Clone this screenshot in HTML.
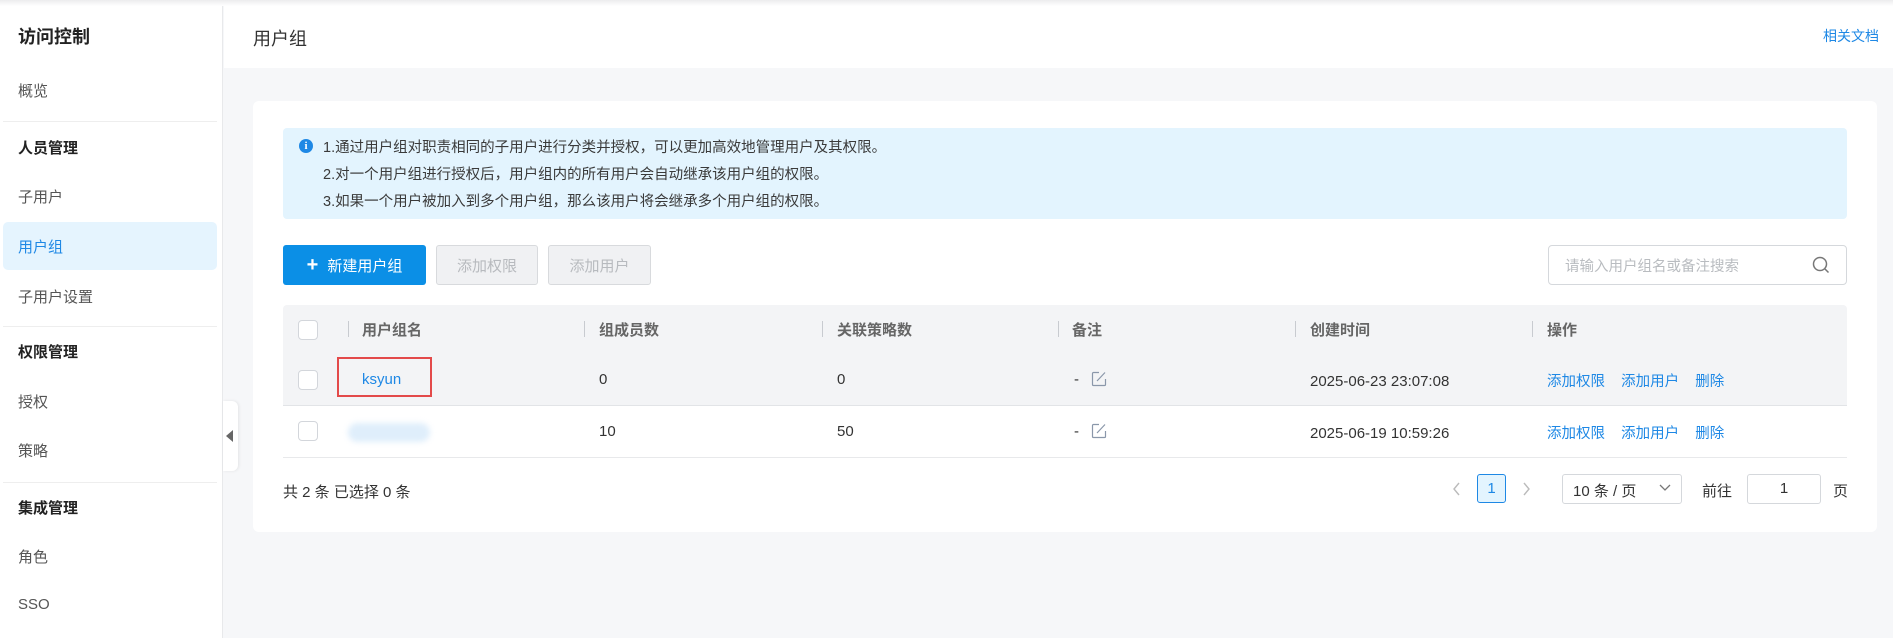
<!DOCTYPE html>
<html><head><meta charset="utf-8"><style>
*{margin:0;padding:0;box-sizing:border-box}
body{width:1893px;height:638px;overflow:hidden;background:#f6f7f9;font-family:"Liberation Sans","Noto Sans CJK SC",sans-serif;font-size:15px;color:#333;position:relative}
.a{position:absolute;white-space:nowrap}
.side{position:absolute;left:0;top:0;width:223px;height:638px;background:#fff;border-right:1px solid #e8e9eb}
.hdr{position:absolute;left:224px;top:0;width:1669px;height:68px;background:#fff}
.card{position:absolute;left:253px;top:101px;width:1624px;height:431px;background:#fff;border-radius:6px}
.cb{position:absolute;width:20px;height:20px;border:1px solid #d3d6db;border-radius:4px;background:#fff}
.th{color:#666;font-weight:bold}
.sep{position:absolute;width:1px;height:16px;background:#c8cbd0}
.lnk{color:#1e88e5}
.btn{position:absolute;top:245px;height:40px;border-radius:3px;display:flex;align-items:center;justify-content:center;font-size:15px}
</style></head><body>
<div style="position:absolute;left:0;top:0;width:1893px;height:6px;background:linear-gradient(#ececee,#fff);z-index:5"></div>
<div class="side">
<div class="a" style="left:18px;top:23px;font-size:18px;font-weight:bold;color:#222">访问控制</div>
<div class="a" style="left:18px;top:80px;color:#555">概览</div>
<div class="a" style="left:3px;top:121px;width:214px;height:1px;background:#eee"></div>
<div class="a" style="left:18px;top:137px;font-weight:bold;color:#222">人员管理</div>
<div class="a" style="left:18px;top:186px;color:#555">子用户</div>
<div class="a" style="left:3px;top:222px;width:214px;height:48px;background:#e5f4fe;border-radius:5px"></div>
<div class="a" style="left:18px;top:236px;color:#1e88e5">用户组</div>
<div class="a" style="left:18px;top:286px;color:#555">子用户设置</div>
<div class="a" style="left:3px;top:326px;width:214px;height:1px;background:#eee"></div>
<div class="a" style="left:18px;top:341px;font-weight:bold;color:#222">权限管理</div>
<div class="a" style="left:18px;top:391px;color:#555">授权</div>
<div class="a" style="left:18px;top:440px;color:#555">策略</div>
<div class="a" style="left:3px;top:482px;width:214px;height:1px;background:#eee"></div>
<div class="a" style="left:18px;top:497px;font-weight:bold;color:#222">集成管理</div>
<div class="a" style="left:18px;top:546px;color:#555">角色</div>
<div class="a" style="left:18px;top:596px;color:#555">SSO</div>
</div>
<div class="a" style="left:223px;top:401px;width:15px;height:70px;background:#fff;border-radius:0 6px 6px 0;box-shadow:1px 0 3px rgba(0,0,0,.08)"><div style="position:absolute;left:3px;top:29px;border-right:7px solid #666;border-top:6px solid transparent;border-bottom:6px solid transparent"></div></div>
<div class="hdr"></div>
<div class="a" style="left:253px;top:25px;font-size:18px;color:#333">用户组</div>
<div class="a lnk" style="left:1823px;top:26px;font-size:14px">相关文档</div>
<div class="card"></div>
<div class="a" style="left:283px;top:128px;width:1564px;height:91px;background:#e3f4fe;border-radius:4px"></div>
<div class="a" style="left:299px;top:139px;width:14px;height:14px;border-radius:50%;background:#1e88e5;color:#fff;font-size:11px;font-weight:bold;text-align:center;line-height:14px;font-family:'Liberation Serif',serif">i</div>
<div class="a" style="left:323px;top:135px;font-size:14.5px;color:#3a3a3a;line-height:27px">1.通过用户组对职责相同的子用户进行分类并授权，可以更加高效地管理用户及其权限。<br>2.对一个用户组进行授权后，用户组内的所有用户会自动继承该用户组的权限。<br>3.如果一个用户被加入到多个用户组，那么该用户将会继承多个用户组的权限。</div>
<div class="btn" style="left:283px;width:143px;background:#0b8fe6;color:#fff"><span style="font-size:20px;margin-right:9px;font-weight:bold">+</span>新建用户组</div>
<div class="btn" style="left:436px;width:102px;background:#f0f1f3;border:1px solid #d8dadd;color:#b7babe">添加权限</div>
<div class="btn" style="left:548px;width:103px;background:#f0f1f3;border:1px solid #d8dadd;color:#b7babe">添加用户</div>
<div class="a" style="left:1548px;top:245px;width:299px;height:40px;border:1px solid #d5d8dc;border-radius:4px;background:#fff"></div>
<div class="a" style="left:1565px;top:255px;font-size:14.5px;color:#b9bcc0">请输入用户组名或备注搜索</div>
<svg class="a" style="left:1812px;top:256px" width="18" height="18" viewBox="0 0 18 18"><circle cx="8" cy="8" r="6.5" fill="none" stroke="#777" stroke-width="1.5"/><path d="M13 13l3.5 3.5" stroke="#777" stroke-width="1.5"/></svg>
<div class="a" style="left:283px;top:305px;width:1564px;height:101px;background:#f3f4f6;border-radius:4px 4px 0 0"></div>
<div class="a" style="left:283px;top:405px;width:1564px;height:1px;background:#e2e4e7"></div>
<div class="a" style="left:283px;top:457px;width:1564px;height:1px;background:#e8e9eb"></div>
<div class="cb" style="left:298px;top:320px"></div>
<div class="cb" style="left:298px;top:370px"></div>
<div class="cb" style="left:298px;top:421px"></div>
<div class="sep" style="left:348px;top:321px"></div>
<div class="sep" style="left:584px;top:321px"></div>
<div class="sep" style="left:822px;top:321px"></div>
<div class="sep" style="left:1058px;top:321px"></div>
<div class="sep" style="left:1295px;top:321px"></div>
<div class="sep" style="left:1532px;top:321px"></div>
<div class="a th" style="left:362px;top:319px">用户组名</div>
<div class="a th" style="left:599px;top:319px">组成员数</div>
<div class="a th" style="left:837px;top:319px">关联策略数</div>
<div class="a th" style="left:1072px;top:319px">备注</div>
<div class="a th" style="left:1310px;top:319px">创建时间</div>
<div class="a th" style="left:1547px;top:319px">操作</div>
<div class="a" style="left:337px;top:357px;width:95px;height:40px;border:2px solid #e34a4a"></div>
<div class="a lnk" style="left:362px;top:371px">ksyun</div>
<div class="a" style="left:599px;top:371px">0</div>
<div class="a" style="left:837px;top:371px">0</div>
<div class="a" style="left:1074px;top:371px">-</div>
<svg class="a" style="left:1091px;top:371px" width="16" height="16" viewBox="0 0 16 16"><path d="M8 1.5H2.5a1 1 0 0 0-1 1v11a1 1 0 0 0 1 1h11a1 1 0 0 0 1-1V8M6 10l8-8.5" fill="none" stroke="#8a97aa" stroke-width="1.2"/></svg>
<div class="a" style="left:1310px;top:373px">2025-06-23 23:07:08</div>
<div class="a lnk" style="left:1547px;top:370px;font-size:14.5px">添加权限&nbsp;&nbsp;&nbsp;&nbsp;添加用户&nbsp;&nbsp;&nbsp;&nbsp;删除</div>
<div class="a" style="left:348px;top:423px;width:82px;height:19px;border-radius:10px;background:#dfeefb;filter:blur(3px)"></div>
<div class="a" style="left:599px;top:423px">10</div>
<div class="a" style="left:837px;top:423px">50</div>
<div class="a" style="left:1074px;top:423px">-</div>
<svg class="a" style="left:1091px;top:423px" width="16" height="16" viewBox="0 0 16 16"><path d="M8 1.5H2.5a1 1 0 0 0-1 1v11a1 1 0 0 0 1 1h11a1 1 0 0 0 1-1V8M6 10l8-8.5" fill="none" stroke="#8a97aa" stroke-width="1.2"/></svg>
<div class="a" style="left:1310px;top:425px">2025-06-19 10:59:26</div>
<div class="a lnk" style="left:1547px;top:422px;font-size:14.5px">添加权限&nbsp;&nbsp;&nbsp;&nbsp;添加用户&nbsp;&nbsp;&nbsp;&nbsp;删除</div>
<div class="a" style="left:283px;top:481px">共 2 条 已选择 0 条</div>
<svg class="a" style="left:1451px;top:481px" width="10" height="16" viewBox="0 0 10 16"><path d="M8 2L3 8l5 6" fill="none" stroke="#bbb" stroke-width="1.4"/></svg>
<div class="a" style="left:1477px;top:474px;width:29px;height:29px;border:1px solid #1e88e5;border-radius:3px;background:#e3f4fe;color:#1e88e5;text-align:center;line-height:27px">1</div>
<svg class="a" style="left:1522px;top:481px" width="10" height="16" viewBox="0 0 10 16"><path d="M2 2l5 6-5 6" fill="none" stroke="#bbb" stroke-width="1.4"/></svg>
<div class="a" style="left:1562px;top:474px;width:120px;height:30px;border:1px solid #d5d8dc;border-radius:3px"></div>
<div class="a" style="left:1573px;top:480px">10 条 / 页</div>
<svg class="a" style="left:1659px;top:484px" width="12" height="8" viewBox="0 0 12 8"><path d="M1 1l5 5 5-5" fill="none" stroke="#777" stroke-width="1.3"/></svg>
<div class="a" style="left:1702px;top:480px">前往</div>
<div class="a" style="left:1747px;top:474px;width:74px;height:30px;border:1px solid #d5d8dc;border-radius:3px;text-align:center;line-height:28px">1</div>
<div class="a" style="left:1833px;top:480px">页</div>
</body></html>
